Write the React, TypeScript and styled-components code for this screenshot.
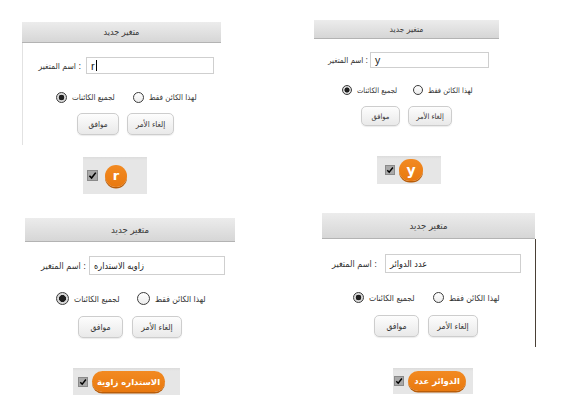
import React from 'react'
import styled, { createGlobalStyle } from 'styled-components'

const Global = createGlobalStyle`
  html, body {
    margin: 0;
    padding: 0;
    background: #ffffff;
  }
  body {
    font-family: "DejaVu Sans Condensed", "DejaVu Sans", sans-serif;
    color: #2b2b2b;
  }
`

type Panel = {
  dx: number
  dy: number
  w: number
  hh: number
  fs: number
  edge: 'left' | 'right' | 'none'
  bodyH: number
  nameTop: number
  inputLeft: number
  labelGap: number
  inputW: number
  inputH: number
  value: string
  latin?: boolean
  cursor?: boolean
  radioTop: number
  radioLeft: number
  radioSize: number
  optW: number
  btnTop: number
  btnLeft: number
  btnH: number
  okW: number
  cancelW: number
  btnGap: number
  wTop: number
  wLeft: number
  wW: number
  wH: number
  wPad: number
  checkSize: number
  badgeGap: number
  badgeW: number
  badgeH: number
  badge: string
  badgeFs: number
}

const panels: Panel[] = [
  {
    dx: 22, dy: 22, w: 199, hh: 21, fs: 8, edge: 'left', bodyH: 102,
    nameTop: 14, inputLeft: 63, labelGap: 5, inputW: 128, inputH: 17, value: 'r', latin: true, cursor: true,
    radioTop: 18, radioLeft: 33, radioSize: 11, optW: 77,
    btnTop: 10, btnLeft: 54, btnH: 22, okW: 42, cancelW: 47, btnGap: 8,
    wTop: 12, wLeft: 83, wW: 64, wH: 37, wPad: 4, checkSize: 11, badgeGap: 7, badgeW: 22, badgeH: 22,
    badge: 'r', badgeFs: 13,
  },
  {
    dx: 24, dy: 20, w: 185, hh: 19, fs: 7.5, edge: 'none', bodyH: 91,
    nameTop: 13, inputLeft: 56, labelGap: 2, inputW: 119, inputH: 16, value: 'y', latin: true,
    radioTop: 17, radioLeft: 28, radioSize: 10, optW: 71,
    btnTop: 11, btnLeft: 47, btnH: 20, okW: 39, cancelW: 44, btnGap: 8,
    wTop: 26, wLeft: 87, wW: 64, wH: 28, wPad: 8, checkSize: 10, badgeGap: 4, badgeW: 24, badgeH: 22,
    badge: 'y', badgeFs: 14,
  },
  {
    dx: 25, dy: 18, w: 210, hh: 24, fs: 8.5, edge: 'none', bodyH: 103,
    nameTop: 14, inputLeft: 64, labelGap: 3, inputW: 136, inputH: 19, value: 'زاويه الاستداره',
    radioTop: 17, radioLeft: 31, radioSize: 13, optW: 81,
    btnTop: 11, btnLeft: 53, btnH: 22, okW: 45, cancelW: 50, btnGap: 9,
    wTop: 23, wLeft: 73, wW: 107, wH: 27, wPad: 5, checkSize: 10, badgeGap: 4, badgeW: 73, badgeH: 21,
    badge: 'الاستداره زاوية', badgeFs: 8.5,
  },
  {
    dx: 32, dy: 13, w: 213, hh: 26, fs: 8.5, edge: 'right', bodyH: 108,
    nameTop: 15, inputLeft: 63, labelGap: 8, inputW: 136, inputH: 19, value: 'عدد الدوائر',
    radioTop: 19, radioLeft: 31, radioSize: 11, optW: 80,
    btnTop: 12, btnLeft: 52, btnH: 22, okW: 45, cancelW: 50, btnGap: 9,
    wTop: 21, wLeft: 103, wW: 80, wH: 26, wPad: 1, checkSize: 10, badgeGap: 4, badgeW: 58, badgeH: 20,
    badge: 'الدوائر عدد', badgeFs: 8.5,
  },
]

const App = () => {
  return (
    <>
      <Global />
      <Page>
        {panels.map((p, i) => (
          <Cell key={i}>
            <Dialog $p={p}>
              <Header $h={p.hh} $fs={p.fs + 1}>
                <span dir="rtl">متغير جديد</span>
              </Header>
              <Body $p={p}>
                <NameRow $top={p.nameTop}>
                  <Label $w={p.inputLeft} $gap={p.labelGap} $fs={p.fs + 0.5}>
                    اسم المتغير :
                  </Label>
                  <NameInput $w={p.inputW} $h={p.inputH} $fs={p.latin ? p.fs + 3 : p.fs + 0.5}>
                    <span>{p.value}</span>
                    {p.cursor && <Caret />}
                  </NameInput>
                </NameRow>
                <RadioRow $top={p.radioTop} $left={p.radioLeft} $h={p.radioSize}>
                  <Option $w={p.optW}>
                    <Radio $size={p.radioSize} $on />
                    <OptText $fs={p.fs}>لجميع الكائنات</OptText>
                  </Option>
                  <Option>
                    <Radio $size={p.radioSize} />
                    <OptText $fs={p.fs}>لهذا الكائن فقط</OptText>
                  </Option>
                </RadioRow>
                <ButtonRow $top={p.btnTop} $left={p.btnLeft} $gap={p.btnGap}>
                  <Button $w={p.okW} $h={p.btnH} $fs={p.fs}>موافق</Button>
                  <Button $w={p.cancelW} $h={p.btnH} $fs={p.fs}>إلغاء الأمر</Button>
                </ButtonRow>
              </Body>
            </Dialog>
            <Watcher $p={p}>
              <Check $size={p.checkSize}>
                <svg viewBox="0 0 10 10" width="100%" height="100%">
                  <path d="M1.6 5.2 L4 7.8 L8.6 1.8" fill="none" stroke="#000" strokeWidth="1.8" />
                </svg>
              </Check>
              <Badge $w={p.badgeW} $h={p.badgeH} $fs={p.badgeFs}>
                {p.badge}
              </Badge>
            </Watcher>
          </Cell>
        ))}
      </Page>
    </>
  )
}

export default App

const Page = styled.div`
  width: 565px;
  height: 407px;
  display: grid;
  grid-template-columns: 290px 275px;
  grid-template-rows: 200px 207px;
  overflow: hidden;
`

const Cell = styled.div`
  display: flex;
  flex-direction: column;
  align-items: flex-start;
`

const Dialog = styled.div<{ $p: Panel }>`
  margin-left: ${(p) => p.$p.dx}px;
  margin-top: ${(p) => p.$p.dy}px;
  width: ${(p) => p.$p.w}px;
  display: flex;
  flex-direction: column;
`

const Header = styled.div<{ $h: number; $fs: number }>`
  height: ${(p) => p.$h}px;
  box-sizing: border-box;
  background: linear-gradient(#ececec, #d6d6d6);
  border-bottom: 1px solid #b3b3b3;
  display: flex;
  align-items: center;
  justify-content: center;
  font-size: ${(p) => p.$fs}px;
  color: #3a3a3a;
`

const Body = styled.div<{ $p: Panel }>`
  height: ${(p) => p.$p.bodyH}px;
  box-sizing: border-box;
  display: flex;
  flex-direction: column;
  border-left: ${(p) => (p.$p.edge === 'left' ? '1px solid #e2e2e2' : 'none')};
  border-right: ${(p) => (p.$p.edge === 'right' ? '1px solid #4a4036' : 'none')};
  margin-right: ${(p) => (p.$p.edge === 'right' ? '-1px' : '0')};
`

const NameRow = styled.div<{ $top: number }>`
  margin-top: ${(p) => p.$top}px;
  display: flex;
  align-items: center;
`

const Label = styled.div<{ $w: number; $gap: number; $fs: number }>`
  width: ${(p) => p.$w}px;
  box-sizing: border-box;
  padding-right: ${(p) => p.$gap}px;
  text-align: right;
  font-size: ${(p) => p.$fs}px;
  white-space: nowrap;
  color: #333;
`

const NameInput = styled.div<{ $w: number; $h: number; $fs: number }>`
  width: ${(p) => p.$w}px;
  height: ${(p) => p.$h}px;
  box-sizing: border-box;
  border: 1px solid #cfcfcf;
  background: #fff;
  display: flex;
  align-items: center;
  padding-left: 4px;
  font-family: "Liberation Sans", "DejaVu Sans Condensed", "DejaVu Sans", sans-serif;
  font-size: ${(p) => p.$fs}px;
  color: #222;
  white-space: nowrap;
`

const Caret = styled.span`
  width: 1px;
  height: 70%;
  background: #000;
  margin-left: 1px;
`

const RadioRow = styled.div<{ $top: number; $left: number; $h: number }>`
  margin-top: ${(p) => p.$top}px;
  padding-left: ${(p) => p.$left}px;
  height: ${(p) => p.$h}px;
  display: flex;
  align-items: center;
`

const Option = styled.div<{ $w?: number }>`
  ${(p) => (p.$w ? `width: ${p.$w}px;` : '')}
  flex: none;
  display: flex;
  align-items: center;
  gap: 5px;
`

const Radio = styled.span<{ $size: number; $on?: boolean }>`
  width: ${(p) => p.$size}px;
  height: ${(p) => p.$size}px;
  flex: none;
  box-sizing: border-box;
  border-radius: 50%;
  border: 1px solid #3c3c3c;
  background: ${(p) =>
    p.$on
      ? 'radial-gradient(circle, #1e1e1e 0 42%, #d8d8d8 48% 100%)'
      : 'linear-gradient(#ffffff, #ececec)'};
`

const OptText = styled.span<{ $fs: number }>`
  font-size: ${(p) => p.$fs}px;
  white-space: nowrap;
  color: #333;
`

const ButtonRow = styled.div<{ $top: number; $left: number; $gap: number }>`
  margin-top: ${(p) => p.$top}px;
  padding-left: ${(p) => p.$left}px;
  display: flex;
  gap: ${(p) => p.$gap}px;
`

const Button = styled.div<{ $w: number; $h: number; $fs: number }>`
  width: ${(p) => p.$w}px;
  height: ${(p) => p.$h}px;
  box-sizing: border-box;
  border: 1px solid #cdcdcd;
  border-radius: 5px;
  background: linear-gradient(#fdfdfd, #e9e9e9);
  box-shadow: 0 1px 1px rgba(0, 0, 0, 0.08);
  display: flex;
  align-items: center;
  justify-content: center;
  font-size: ${(p) => p.$fs}px;
  color: #333;
  white-space: nowrap;
`

const Watcher = styled.div<{ $p: Panel }>`
  margin-left: ${(p) => p.$p.wLeft}px;
  margin-top: ${(p) => p.$p.wTop}px;
  width: ${(p) => p.$p.wW}px;
  height: ${(p) => p.$p.wH}px;
  box-sizing: border-box;
  padding-left: ${(p) => p.$p.wPad}px;
  gap: ${(p) => p.$p.badgeGap}px;
  background: linear-gradient(#dcdcdc, #e6e6e6 3px, #e6e6e6);
  display: flex;
  align-items: center;
`

const Check = styled.span<{ $size: number }>`
  width: ${(p) => p.$size}px;
  height: ${(p) => p.$size}px;
  flex: none;
  box-sizing: border-box;
  background: #a9a9a9;
  border: 1px solid #8a8a8a;
  display: flex;
`

const Badge = styled.div<{ $w: number; $h: number; $fs: number }>`
  width: ${(p) => p.$w}px;
  height: ${(p) => p.$h}px;
  flex: none;
  box-sizing: border-box;
  border-radius: ${(p) => p.$h / 2}px;
  background: linear-gradient(#f28a22, #e9790f);
  box-shadow: 0 1.5px 0 #b85d0a;
  color: #fff;
  font-family: "DejaVu Sans", sans-serif;
  font-weight: bold;
  font-size: ${(p) => p.$fs}px;
  display: flex;
  align-items: center;
  justify-content: center;
  white-space: nowrap;
`
